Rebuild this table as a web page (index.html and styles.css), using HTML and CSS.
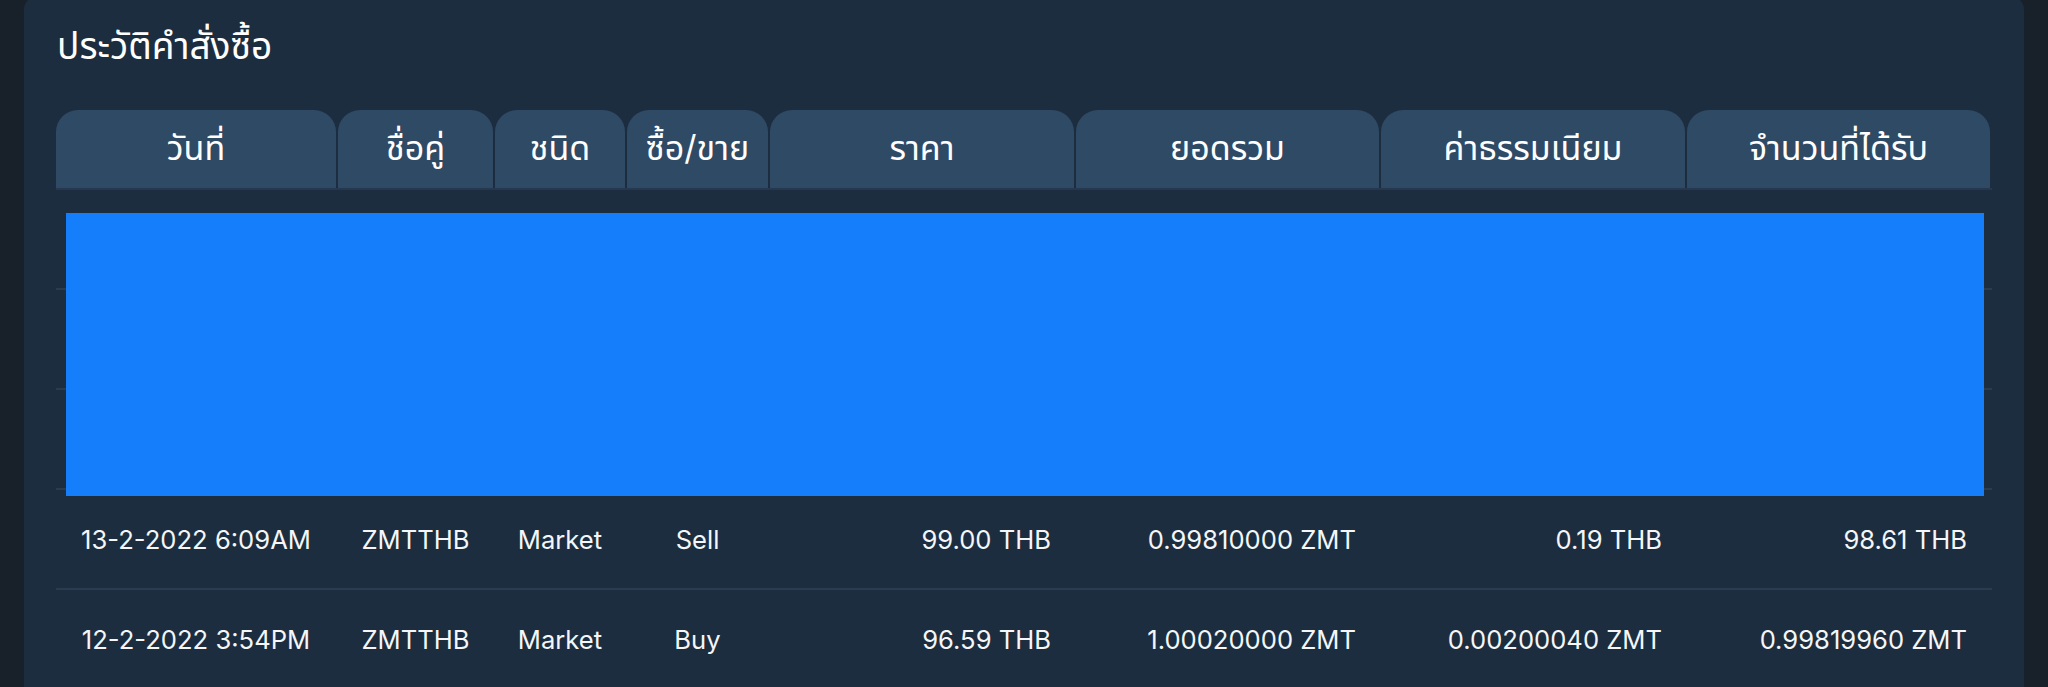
FILE: index.html
```html
<!DOCTYPE html>
<html lang="th">
<head>
<meta charset="utf-8">
<title>ประวัติคำสั่งซื้อ</title>
<link rel="stylesheet" href="styles.css">
</head>
<body>
<div class="page">
  <section class="panel">
    <h2 class="title">ประวัติคำสั่งซื้อ</h2>
    <div class="table">
      <div class="thead">
        <div class="th">วันที่</div>
        <div class="th">ชื่อคู่</div>
        <div class="th">ชนิด</div>
        <div class="th">ซื้อ/ขาย</div>
        <div class="th">ราคา</div>
        <div class="th">ยอดรวม</div>
        <div class="th">ค่าธรรมเนียม</div>
        <div class="th">จำนวนที่ได้รับ</div>
      </div>
      <div class="tbody">
        <div class="row empty"></div>
        <div class="row empty"></div>
        <div class="row empty"></div>
        <div class="overlay"></div>
        <div class="row">
          <div class="td c">13-2-2022 6:09AM</div>
          <div class="td c">ZMTTHB</div>
          <div class="td c">Market</div>
          <div class="td c">Sell</div>
          <div class="td r">99.00 THB</div>
          <div class="td r">0.99810000 ZMT</div>
          <div class="td r">0.19 THB</div>
          <div class="td r">98.61 THB</div>
        </div>
        <div class="row">
          <div class="td c">12-2-2022 3:54PM</div>
          <div class="td c">ZMTTHB</div>
          <div class="td c">Market</div>
          <div class="td c">Buy</div>
          <div class="td r">96.59 THB</div>
          <div class="td r">1.00020000 ZMT</div>
          <div class="td r">0.00200040 ZMT</div>
          <div class="td r">0.99819960 ZMT</div>
        </div>
      </div>
    </div>
  </section>
</div>
</body>
</html>
```

FILE: styles.css
```css
html, body {
  margin: 0;
  padding: 0;
  background: #18202a;
  height: 100%;
  overflow: hidden;
}

body {
  font-family: "Inter", "Noto Sans Thai", "Noto Sans", sans-serif;
  color: #ffffff;
}

.page {
  padding: 0 24px;
}

.panel {
  background: #1d2d40;
  border-radius: 14px;
  margin-top: -4px;
  padding: 25px 32px 40px 32px;
  min-height: 700px;
}

.title {
  margin: 0;
  font-size: 37px;
  font-weight: 400;
  line-height: 50px;
  height: 50px;
  padding-left: 1px;
}

.table {
  margin-top: 39px;
}

.thead,
.row {
  display: grid;
  grid-template-columns: 280px 155px 130px 141px 304px 303px 304px 303px;
  column-gap: 2px;
}

.thead {
  border-bottom: 2px solid #253850;
}

.th {
  background: #2f4a64;
  border-radius: 22px 22px 0 0;
  height: 78px;
  display: flex;
  align-items: center;
  justify-content: center;
  font-size: 34px;
  font-weight: 400;
  white-space: nowrap;
}

.tbody {
  position: relative;
}

.row {
  height: 98px;
  border-bottom: 2px solid #2b3c50;
}

.td {
  display: flex;
  align-items: center;
  font-size: 25.6px;
  white-space: nowrap;
  color: #f4f6f8;
}

.td.c {
  justify-content: center;
}

.td.r {
  justify-content: flex-end;
  padding-right: 23px;
}

.overlay {
  position: absolute;
  left: 10px;
  right: 8px;
  top: 23px;
  height: 283px;
  background: #157efb;
}
```
